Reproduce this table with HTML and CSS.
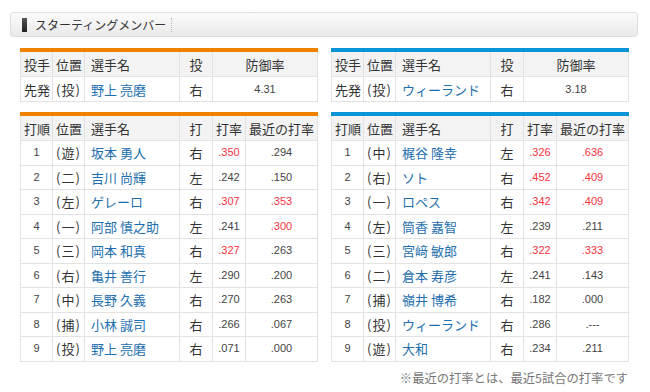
FILE: index.html
```html
<!DOCTYPE html>
<html lang="ja">
<head>
<meta charset="utf-8">
<title>スターティングメンバー</title>
<link rel="stylesheet" href="styles.css">
</head>
<body>
<div class="page">
  <div class="titlebar">
    <span class="title-mark"></span>
    <span class="title-text">スターティングメンバー</span>
    <span class="title-sep"></span>
  </div>

  <div class="grid">
    <table class="tbl orange">
      <colgroup><col class="c32"><col class="c32"><col class="c95"><col class="c33"><col class="c105"></colgroup>
      <tr class="head"><th class="l">投手</th><th class="l">位置</th><th class="l name">選手名</th><th>投</th><th>防御率</th></tr>
      <tr><td class="l">先発</td><td class="pos">(投)</td><td class="name">野上 亮磨</td><td>右</td><td class="num">4.31</td></tr>
    </table>

    <table class="tbl blue">
      <colgroup><col class="c32"><col class="c32"><col class="c95"><col class="c33"><col class="c105"></colgroup>
      <tr class="head"><th class="l">投手</th><th class="l">位置</th><th class="l name">選手名</th><th>投</th><th>防御率</th></tr>
      <tr><td class="l">先発</td><td class="pos">(投)</td><td class="name">ウィーランド</td><td>右</td><td class="num">3.18</td></tr>
    </table>

    <table class="tbl orange bat">
      <colgroup><col class="c32"><col class="c32"><col class="c95"><col class="c33"><col class="c33"><col class="c72"></colgroup>
      <tr class="head"><th class="l">打順</th><th class="l">位置</th><th class="l name">選手名</th><th>打</th><th class="l">打率</th><th>最近の打率</th></tr>
      <tr><td class="num">1</td><td class="pos">(遊)</td><td class="name">坂本 勇人</td><td>右</td><td class="num hot">.350</td><td class="num">.294</td></tr>
      <tr><td class="num">2</td><td class="pos">(二)</td><td class="name">吉川 尚輝</td><td>左</td><td class="num">.242</td><td class="num">.150</td></tr>
      <tr><td class="num">3</td><td class="pos">(左)</td><td class="name">ゲレーロ</td><td>右</td><td class="num hot">.307</td><td class="num hot">.353</td></tr>
      <tr><td class="num">4</td><td class="pos">(一)</td><td class="name">阿部 慎之助</td><td>左</td><td class="num">.241</td><td class="num hot">.300</td></tr>
      <tr><td class="num">5</td><td class="pos">(三)</td><td class="name">岡本 和真</td><td>右</td><td class="num hot">.327</td><td class="num">.263</td></tr>
      <tr><td class="num">6</td><td class="pos">(右)</td><td class="name">亀井 善行</td><td>左</td><td class="num">.290</td><td class="num">.200</td></tr>
      <tr><td class="num">7</td><td class="pos">(中)</td><td class="name">長野 久義</td><td>右</td><td class="num">.270</td><td class="num">.263</td></tr>
      <tr><td class="num">8</td><td class="pos">(捕)</td><td class="name">小林 誠司</td><td>右</td><td class="num">.266</td><td class="num">.067</td></tr>
      <tr><td class="num">9</td><td class="pos">(投)</td><td class="name">野上 亮磨</td><td>右</td><td class="num">.071</td><td class="num">.000</td></tr>
    </table>

    <table class="tbl blue bat">
      <colgroup><col class="c32"><col class="c32"><col class="c95"><col class="c33"><col class="c33"><col class="c72"></colgroup>
      <tr class="head"><th class="l">打順</th><th class="l">位置</th><th class="l name">選手名</th><th>打</th><th class="l">打率</th><th>最近の打率</th></tr>
      <tr><td class="num">1</td><td class="pos">(中)</td><td class="name">梶谷 隆幸</td><td>左</td><td class="num hot">.326</td><td class="num hot">.636</td></tr>
      <tr><td class="num">2</td><td class="pos">(右)</td><td class="name">ソト</td><td>右</td><td class="num hot">.452</td><td class="num hot">.409</td></tr>
      <tr><td class="num">3</td><td class="pos">(一)</td><td class="name">ロペス</td><td>右</td><td class="num hot">.342</td><td class="num hot">.409</td></tr>
      <tr><td class="num">4</td><td class="pos">(左)</td><td class="name">筒香 嘉智</td><td>左</td><td class="num">.239</td><td class="num">.211</td></tr>
      <tr><td class="num">5</td><td class="pos">(三)</td><td class="name">宮﨑 敏郎</td><td>右</td><td class="num hot">.322</td><td class="num hot">.333</td></tr>
      <tr><td class="num">6</td><td class="pos">(二)</td><td class="name">倉本 寿彦</td><td>左</td><td class="num">.241</td><td class="num">.143</td></tr>
      <tr><td class="num">7</td><td class="pos">(捕)</td><td class="name">嶺井 博希</td><td>右</td><td class="num">.182</td><td class="num">.000</td></tr>
      <tr><td class="num">8</td><td class="pos">(投)</td><td class="name">ウィーランド</td><td>右</td><td class="num">.286</td><td class="num">.---</td></tr>
      <tr><td class="num">9</td><td class="pos">(遊)</td><td class="name">大和</td><td>右</td><td class="num">.234</td><td class="num">.211</td></tr>
    </table>
  </div>

  <p class="note">※最近の打率とは、最近5試合の打率です</p>
</div>
</body>
</html>
```

FILE: styles.css
```css
html, body {
  margin: 0;
  padding: 0;
  background: #ffffff;
}

body {
  font-family: "Noto Sans CJK JP", "Liberation Sans", sans-serif;
  color: #333333;
}

.page {
  width: 628px;
  padding: 12px 0 0 10px;
}

.titlebar {
  box-sizing: border-box;
  height: 25px;
  display: flex;
  align-items: center;
  border: 1px solid #dedede;
  border-radius: 3px;
  background: linear-gradient(to bottom, #fbfbfb 0%, #f3f3f3 50%, #e9e9e9 100%);
  padding-left: 11px;
}

.title-mark {
  width: 5px;
  height: 14px;
  background: linear-gradient(to bottom, #555 0%, #222 100%);
}

.title-text {
  margin-left: 8px;
  font-size: 12px;
  color: #333;
  line-height: 1;
}

.title-sep {
  margin-left: 5px;
  width: 0;
  height: 14px;
  border-left: 1px dotted #b8b8b8;
}

.grid {
  display: grid;
  grid-template-columns: 297px 297px;
  column-gap: 14px;
  row-gap: 10px;
  padding: 0 10px;
  margin-top: 11px;
}

.tbl {
  width: 297px;
  table-layout: fixed;
  border-collapse: collapse;
  font-size: 13px;
}

.tbl.orange { border-top: 4px solid #ef8200; }
.tbl.blue { border-top: 4px solid #0a94d8; }

.c32 { width: 32px; }
.c33 { width: 33px; }
.c72 { width: 72px; }
.c95 { width: 95px; }
.c105 { width: 105px; }

.tbl th, .tbl td {
  border: 1px solid #e2e2e2;
  height: 24px;
  padding: 0;
  text-align: center;
  white-space: nowrap;
  overflow: hidden;
  font-weight: normal;
  line-height: 1;
}

.bat td { height: 23.5px; }

.tbl .head th {
  background: #f3f3f3;
  color: #333;
}

.tbl .l { text-align: left; padding-left: 3px; }
.tbl .name { text-align: left; padding-left: 6px; color: #1e6fae; }
.tbl th.name { color: #333; }

.tbl .pos {
  letter-spacing: 1px;
  text-align: center;
}

.tbl .num {
  font-family: "Liberation Sans", "Noto Sans CJK JP", sans-serif;
  font-size: 11px;
  color: #444;
}

.tbl .num.hot { color: #f5333f; }

.note {
  margin: 7px 0 0;
  padding-right: 10px;
  text-align: right;
  font-size: 12.3px;
  color: #777;
}
```
